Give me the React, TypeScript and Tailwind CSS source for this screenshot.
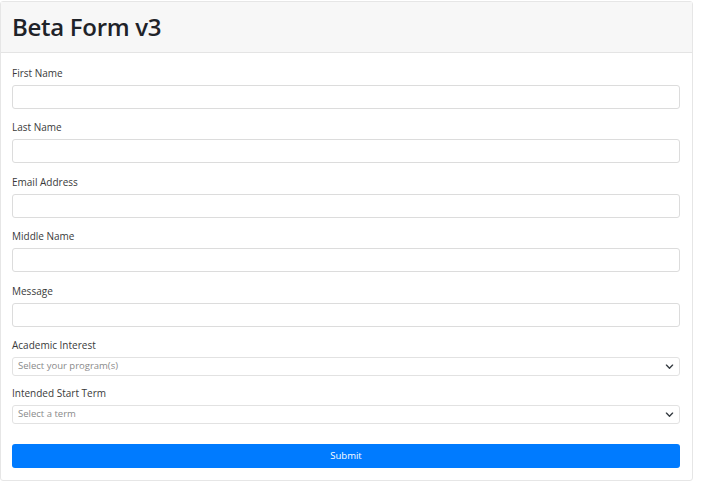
import React from "react";

function Chevron() {
  return (
    <svg width="9" height="9" viewBox="0 0 16 16" className="shrink-0">
      <path d="M2.5 5.5l5.5 5.5 5.5-5.5" fill="none" stroke="#343a40" strokeWidth="2.4" strokeLinecap="round" strokeLinejoin="round" />
    </svg>
  );
}

function TextField({ label, mb }: { label: string; mb: string }) {
  return (
    <div className={mb}>
      <div className="h-4 leading-4 text-[10px] text-[#3a3a3a] mb-1">{label}</div>
      <div className="h-6 border border-[#dcdcdc] rounded-[3px] bg-white" />
    </div>
  );
}

function SelectField({ label, placeholder, mb }: { label: string; placeholder: string; mb: string }) {
  return (
    <div className={mb}>
      <div className="h-4 leading-4 text-[10px] text-[#3a3a3a] mb-1">{label}</div>
      <div className="h-[19px] border border-[#e2e2e2] rounded-[3px] bg-white flex items-center justify-between pl-[5px] pr-[5px]">
        <span className="text-[9.5px] text-[#8a8a8a]">{placeholder}</span>
        <Chevron />
      </div>
    </div>
  );
}

export default function App() {
  return (
    <div className="w-[708px] h-[484px] bg-white pt-[1px]" style={{ fontFamily: '"Open Sans", "Noto Sans", sans-serif' }}>
      <div className="w-[693px] h-[480px] border border-[#e6e6e6] rounded-[3px] flex flex-col">
        <div className="h-[51px] bg-[#f7f7f7] border-b border-[#e4e4e4] flex items-center px-[11px]">
          <h1 className="text-[24px] font-semibold text-[#1f2329] tracking-[-0.3px]">Beta Form v3</h1>
        </div>
        <div className="pt-3 pl-[11px] pr-[12px]">
          <TextField label="First Name" mb="mb-[10px]" />
          <TextField label="Last Name" mb="mb-[11px]" />
          <TextField label="Email Address" mb="mb-[10px]" />
          <TextField label="Middle Name" mb="mb-[11px]" />
          <TextField label="Message" mb="mb-[10px]" />
          <SelectField label="Academic Interest" placeholder="Select your program(s)" mb="mb-[9px]" />
          <SelectField label="Intended Start Term" placeholder="Select a term" mb="mb-5" />
          <button className="w-full h-6 bg-[#007bff] rounded-[3px] text-white text-[9.5px] flex items-center justify-center">
            Submit
          </button>
        </div>
      </div>
    </div>
  );
}
